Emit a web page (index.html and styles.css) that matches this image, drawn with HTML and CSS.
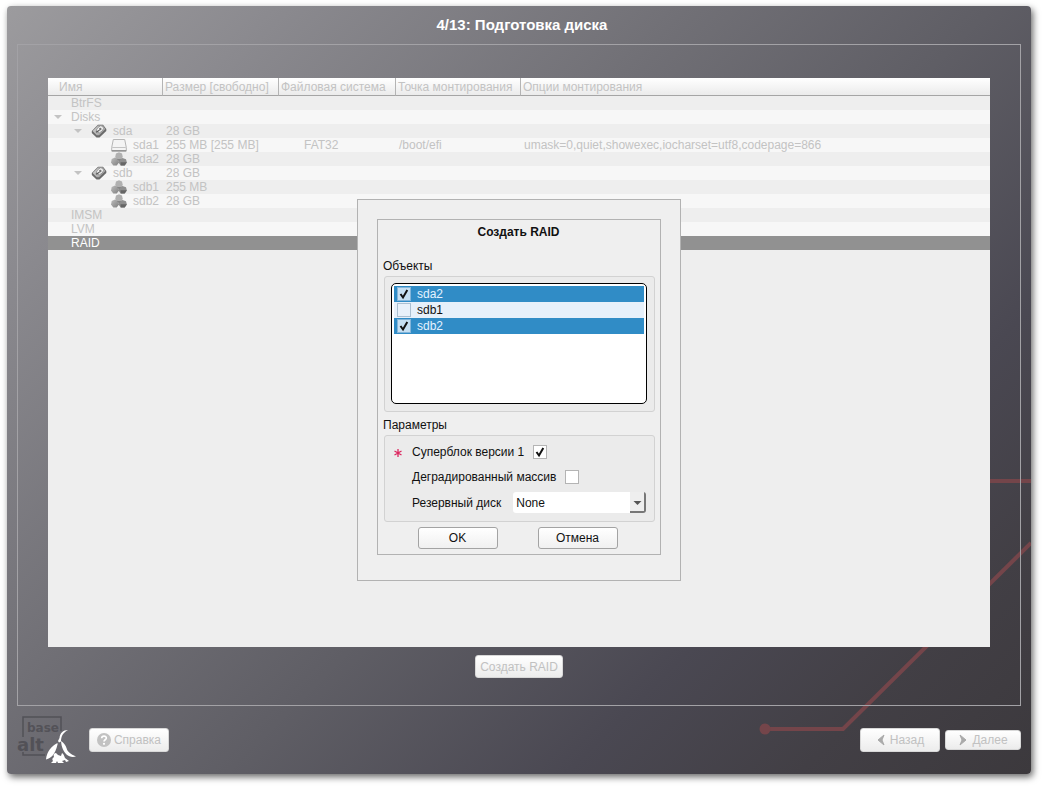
FILE: index.html
```html
<!DOCTYPE html>
<html lang="ru">
<head>
<meta charset="utf-8">
<title>Подготовка диска</title>
<link rel="stylesheet" href="styles.css">
</head>
<body>
<svg class="defs" aria-hidden="true">
  <defs>
    <linearGradient id="steel" x1="0" y1="0" x2="1" y2="1">
      <stop offset="0" stop-color="#d8d8d8"/><stop offset="1" stop-color="#999"/>
    </linearGradient>
    <linearGradient id="ball" x1="0" y1="0" x2="1" y2="1">
      <stop offset="0" stop-color="#bdbdbd"/><stop offset="1" stop-color="#808080"/>
    </linearGradient>
    <symbol id="disk" viewBox="0 0 16 14">
      <path d="M.8 7 7 .7h5L15.300 5v2L8.500 13.500H5.500L.8 9z" fill="#6a6a6a"/>
      <path d="M1.600 7 7.300 1.500h4.400L14.300 5 8 11.300H5.700z" fill="url(#steel)"/>
      <ellipse cx="9" cy="5.300" rx="4" ry="2.800" transform="rotate(-45 9 5.300)" fill="#efefef" stroke="#8a8a8a" stroke-width=".8"/>
      <circle cx="9.300" cy="5" r="1.200" fill="#777"/>
      <path d="M5 8.300 8.500 6.300" stroke="#555" stroke-width="1.300"/>
    </symbol>
    <symbol id="volume" viewBox="0 0 16 14">
      <path d="M2.300 1.500h11.400l1.600 8v3.300H.7V9.500z" fill="#f4f4f4" stroke="#b5b5b5"/>
      <path d="M1.200 9.500h13.600" stroke="#c4c4c4"/>
      <path d="M.7 12.900h14.600" stroke="#808080" stroke-width="1.200"/>
    </symbol>
    <symbol id="raid" viewBox="0 0 16 14">
      <path d="M5 1.500 8 .3l3 1.200.8 3.500-2.300 3h-3L4.200 5z" fill="#b0b0b0"/>
      <path d="M.7 7 4 5.500 7.200 7l.8 3.500L5.700 13.500H2.300L0 10.500z" fill="url(#ball)"/>
      <path d="M8.200 7.500 11.500 6l3.500 1.200.9 3.300-2.200 3H9.700L7.500 10.500z" fill="#8f8f8f"/>
      <path d="M9.500 10.300h6.300l-2.100 3.200h-4z" fill="#666"/>
      <path d="M6 7h4L8 9.500z" fill="#858585"/>
    </symbol>
  </defs>
</svg>

<div class="window">
  <svg class="circuit" viewBox="0 0 280 300" aria-hidden="true">
    <path d="M239 7h41M14 255h78L280 69" fill="none" stroke="#74454a" stroke-width="4"/>
    <circle cx="14" cy="255" r="5.500" fill="#74454a"/>
  </svg>

  <header class="title-bar"><h1>4/13: Подготовка диска</h1></header>

  <main class="frame">
    <div class="tree">
      <table>
        <colgroup><col class="c-name"><col class="c-size"><col class="c-fs"><col class="c-mount"><col></colgroup>
        <thead>
          <tr><th>Имя</th><th>Размер [свободно]</th><th>Файловая система</th><th>Точка монтирования</th><th>Опции монтирования</th></tr>
        </thead>
        <tbody>
          <tr><td><div class="node l1">BtrFS</div></td><td></td><td></td><td></td><td></td></tr>
          <tr><td><div class="node l1 open">Disks</div></td><td></td><td></td><td></td><td></td></tr>
          <tr><td><div class="node l2 open"><svg><use href="#disk"/></svg>sda</div></td><td>28 GB</td><td></td><td></td><td></td></tr>
          <tr><td><div class="node l3"><svg><use href="#volume"/></svg>sda1</div></td><td>255 MB [255 MB]</td><td class="fs">FAT32</td><td>/boot/efi</td><td>umask=0,quiet,showexec,iocharset=utf8,codepage=866</td></tr>
          <tr><td><div class="node l3"><svg><use href="#raid"/></svg>sda2</div></td><td>28 GB</td><td></td><td></td><td></td></tr>
          <tr><td><div class="node l2 open"><svg><use href="#disk"/></svg>sdb</div></td><td>28 GB</td><td></td><td></td><td></td></tr>
          <tr><td><div class="node l3"><svg><use href="#raid"/></svg>sdb1</div></td><td>255 MB</td><td></td><td></td><td></td></tr>
          <tr><td><div class="node l3"><svg><use href="#raid"/></svg>sdb2</div></td><td>28 GB</td><td></td><td></td><td></td></tr>
          <tr><td><div class="node l1">IMSM</div></td><td></td><td></td><td></td><td></td></tr>
          <tr><td><div class="node l1">LVM</div></td><td></td><td></td><td></td><td></td></tr>
          <tr class="current"><td><div class="node l1">RAID</div></td><td></td><td></td><td></td><td></td></tr>
        </tbody>
      </table>
    </div>
    <button class="btn dim create" type="button" disabled>Создать RAID</button>
  </main>

  <footer class="footer">
    <svg class="logo" viewBox="0 0 64 52" role="img" aria-label="basealt">
      <path d="M6 21V1h38v14M6 36v3h22" fill="none" stroke="#525157" stroke-width="1.500"/>
      <text x="10" y="16" class="logo-base">base</text>
      <text x="0" y="35" class="logo-alt">alt</text>
      <g fill="#fff">
        <path d="M51 14c-5 0-8 3-8.500 8l-1.500 3 1 1.500 2-1c0-5 2-9 7-11.500z"/>
        <path d="M40.500 27c-6 3-11 9-11.500 16.500 6-2 9-5 11.500-15z"/>
        <path d="M44 25c3 2 4.500 4 5.500 7 1 4 4 6 9.500 8.500-4 1-7 0-9.500-2-3-3-5-7-5.500-13.500z"/>
        <path d="M39 37c-2 0-3 2-2 4-2 1-2 3-1 4l-2 2h5l1-2 1 2h6l-2-2 3-1 1 2 3-1-4-3c-1-2-1-4-3-5l-1 3-3-1z"/>
      </g>
    </svg>
    <button class="btn dim help" type="button" disabled>
      <svg viewBox="0 0 14 14" width="14" height="14" aria-hidden="true"><circle cx="7" cy="7" r="7" fill="#c2c2c2"/><path d="M4.700 5.300C4.700 2.400 9.500 2.500 9.300 5.200 9.200 6.800 7 6.800 7 8.600" fill="none" stroke="#fff" stroke-width="1.700"/><circle cx="7" cy="10.800" r="1.100" fill="#fff"/></svg>
      Справка
    </button>
    <div class="nav">
      <button class="btn dim back" type="button" disabled>
        <svg viewBox="0 0 10 12" width="10" height="12" aria-hidden="true"><path d="M8 1 2 6l6 5-2-5z" fill="#aaa" stroke="#aaa"/></svg>
        Назад
      </button>
      <button class="btn dim next" type="button" disabled>
        <svg viewBox="0 0 10 12" width="10" height="12" aria-hidden="true"><path d="m2 1 6 5-6 5 2-5z" fill="#aaa" stroke="#aaa"/></svg>
        Далее
      </button>
    </div>
  </footer>

  <div class="dialog" role="dialog" aria-labelledby="dlg-title">
    <form class="dialog-frame">
      <h2 id="dlg-title">Создать RAID</h2>
      <h3 id="objects">Объекты</h3>
      <div class="group">
        <div class="list" role="group" aria-labelledby="objects">
          <label class="item on"><input type="checkbox" checked>sda2</label>
          <label class="item"><input type="checkbox">sdb1</label>
          <label class="item on"><input type="checkbox" checked>sdb2</label>
        </div>
      </div>
      <h3 id="params">Параметры</h3>
      <div class="group params" role="group" aria-labelledby="params">
        <svg class="star" viewBox="0 0 8 8" aria-hidden="true"><path d="M4 0v8M.5 2l7 4M7.500 2l-7 4" stroke="#dc2860" stroke-width="1.300"/></svg>
        <div class="field"><label for="super">Суперблок версии 1</label><input id="super" type="checkbox" checked></div>
        <div class="field"><label for="degraded">Деградированный массив</label><input id="degraded" type="checkbox"></div>
        <div class="field"><label for="spare">Резервный диск</label><select id="spare"><option>None</option></select></div>
      </div>
      <div class="actions">
        <button class="btn" type="button">OK</button>
        <button class="btn" type="button">Отмена</button>
      </div>
    </form>
  </div>
</div>
</body>
</html>
```
FILE: styles.css
```css
* { box-sizing: border-box; }

body {
  margin: 0;
  padding: 6px 13px 14px 7px;
  background: #fff;
  color: #111;
  font: 12px/14px "Liberation Sans", Arial, sans-serif;
}

h1, h2, h3 { margin: 0; }

button, input, select { font: inherit; margin: 0; }

.defs { position: absolute; width: 0; height: 0; }

.window {
  position: relative;
  display: flex;
  flex-direction: column;
  min-height: calc(100vh - 20px);
  border-radius: 4px;
  background: linear-gradient(135deg, #9c9b9e 0%, #8b8a8f 15%, #717076 38%, #5f5e65 55%, #4a4852 74%, #423f45 87%, #3c393d 100%);
  box-shadow: 2px 3px 7px rgba(0, 0, 0, .6);
}

/* decorative lines behind the content */
.circuit {
  position: absolute;
  right: 0;
  bottom: 0;
  width: 280px;
  height: 300px;
}

.title-bar {
  position: relative;
  height: 38px;
  display: flex;
  align-items: center;
  justify-content: center;
  padding-left: 6px;
  color: #fff;
}

.title-bar h1 { font-size: 15px; line-height: 18px; }

.frame {
  position: relative;
  flex: 1;
  display: flex;
  flex-direction: column;
  gap: 8px;
  margin: 0 10px;
  padding: 33px 30px 27px;
  border: 1px solid #a3a2a6;
}

.tree { flex: 1; background: #eee; color: #c3c3c3; }

.tree table { width: 100%; table-layout: fixed; border-collapse: separate; border-spacing: 0; }

.c-name { width: 115px; }
.c-size { width: 116px; }
.c-fs { width: 117px; }
.c-mount { width: 125px; }

.tree th {
  height: 18px;
  padding: 0 0 0 2px;
  text-align: left;
  font-weight: normal;
  white-space: nowrap;
  background: linear-gradient(#fff, #ebebeb);
  border-right: 1px solid #b4b4b4;
  border-bottom: 1px solid #a5a5a5;
}

.tree th:first-child { padding-left: 11px; }
.tree th:last-child { border-right: 0; }

.tree td { height: 14px; padding: 0 0 0 3px; white-space: nowrap; }
.tree td:first-child { padding: 0; }
.tree td.fs { padding-left: 25px; }
.tree tbody tr { background: #eee; }
.tree tbody tr:nth-child(even) { background: #f7f7f7; }
.tree tbody tr.current { background: #919191; color: #fff; }

.node { position: relative; display: flex; height: 14px; gap: 6px; }
.node svg { width: 16px; height: 14px; flex: none; }
.l1 { padding-left: 23px; }
.l2 { padding-left: 43px; }
.l3 { padding-left: 63px; }

.open::before {
  content: "";
  position: absolute;
  top: 5px;
  left: 6px;
  border: 4px solid transparent;
  border-top-color: #c3c3c3;
  border-bottom: 0;
}

.l2.open::before { left: 26px; }

.btn {
  display: flex;
  align-items: center;
  justify-content: center;
  height: 22px;
  padding: 0;
  border: 1px solid #a3a3a3;
  border-radius: 3px;
  background: linear-gradient(#fff, #f0f0f0);
  color: #111;
}

.btn.dim { height: 24px; border-color: #d8d8d8; background: linear-gradient(#fff, #ececec); color: #c1c1c1; }
.btn.create { align-self: center; width: 88px; height: 23px; }

.footer {
  position: relative;
  display: flex;
  align-items: center;
  height: 68px;
  padding: 0 10px;
}

.logo { width: 64px; height: 52px; margin-top: 4px; }
.logo-base { font: bold 12px "DejaVu Sans", sans-serif; fill: #535258; }
.logo-alt { font: bold 18px "DejaVu Sans", sans-serif; fill: #525157; }

.help { width: 80px; margin-left: 8px; gap: 3px; }
.nav { display: flex; align-items: center; gap: 5px; margin-left: auto; }
.back { width: 80px; gap: 4px; }
.btn.next { width: 76px; height: 20px; gap: 4px; }

.dialog {
  position: absolute;
  top: 50%;
  left: 50%;
  transform: translate(-50%, -50%);
  width: 324px;
  padding: 19px 19px 25px;
  border: 1px solid #b2b2b2;
  background: #efefef;
}

.dialog-frame { padding: 5px 5px 5px 6px; border: 1px solid #b2b2b2; }

.dialog h2 { margin-bottom: 20px; padding-right: 2px; text-align: center; font-size: 12px; line-height: 14px; }
.dialog h3 { font-weight: normal; font-size: 12px; line-height: 14px; margin: 0 0 3px -1px; }

.group {
  padding: 6px 7px 7px 6px;
  margin-bottom: 6px;
  border: 1px solid #d2d2d2;
  border-radius: 3px;
  background: #ebebeb;
}

.list {
  height: 121px;
  padding: 2px;
  border: 1px solid #000;
  border-radius: 5px;
  background: #fff;
}

.item {
  display: flex;
  align-items: center;
  gap: 6px;
  height: 16px;
  padding-left: 3px;
  background: #e6f0fa;
}

.item.on { background: #308cc6; color: #e4f2ff; }

input[type="checkbox"] {
  appearance: none;
  width: 14px;
  height: 14px;
  border: 1px solid #b4b4b4;
  background: #fff center / 12px 12px no-repeat;
}

.item input[type="checkbox"] { border-color: #abc0d2; background-color: #e8f1fa; }
.item.on input[type="checkbox"] { border-color: #83b5da; background-color: #c5dff2; }

input[type="checkbox"]:checked {
  background-image: url("data:image/svg+xml,%3Csvg xmlns='http://www.w3.org/2000/svg' viewBox='0 0 12 12'%3E%3Cpath d='M2.500 6 5 9.500 9.300 2' fill='none' stroke='%23111' stroke-width='2'/%3E%3C/svg%3E");
}

.params {
  position: relative;
  display: flex;
  flex-direction: column;
  gap: 5px;
  padding: 6px 8px 8px 27px;
  margin-bottom: 5px;
}

.star { position: absolute; left: 9px; top: 13px; width: 8px; height: 8px; }

.field { display: flex; align-items: center; gap: 9px; min-height: 20px; }

.field select {
  appearance: none;
  flex: 1;
  height: 21px;
  margin-left: 3px;
  padding: 0 18px 0 3px;
  border: 0;
  border-radius: 3px;
  color: #111;
  background: #fff url("data:image/svg+xml,%3Csvg xmlns='http://www.w3.org/2000/svg' viewBox='0 0 16 21'%3E%3Cpath d='M0 0h16v21H0z' fill='%23eee'/%3E%3Cpath d='M0 20h15V0' fill='none' stroke='%23777' stroke-width='2'/%3E%3Cpath d='M3.500 9h8l-4 4z' fill='%23555'/%3E%3C/svg%3E") right / 16px 21px no-repeat;
}

.actions { display: flex; justify-content: center; gap: 40px; padding-right: 4px; }
.actions .btn { width: 80px; }
```
